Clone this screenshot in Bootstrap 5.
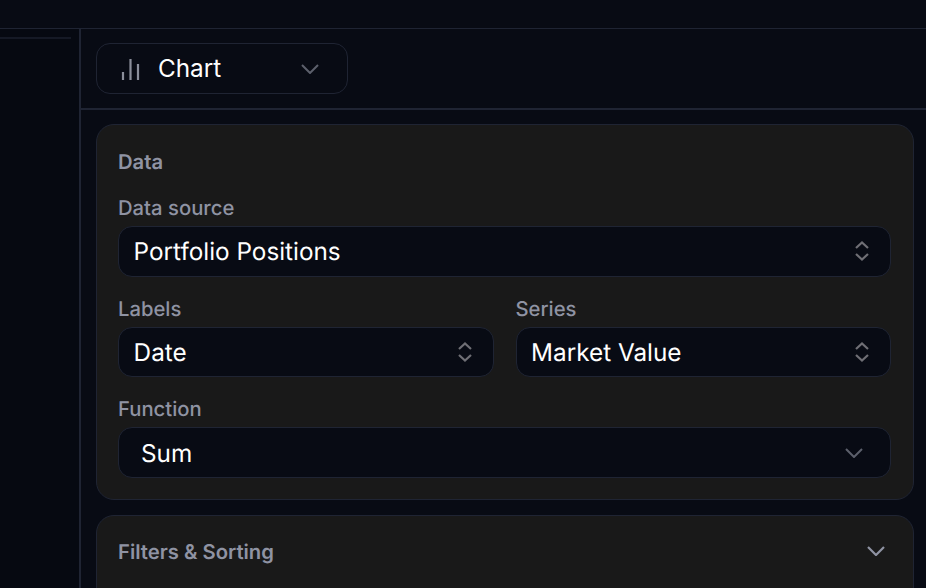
<!DOCTYPE html>
<html lang="en">
<head>
<meta charset="utf-8">
<title>Chart editor</title>
<link rel="stylesheet" href="https://cdn.jsdelivr.net/npm/bootstrap@5.3.0/dist/css/bootstrap.min.css">
<style>
html,body{height:100%;}
body{background:#080b14;font-family:Inter,"Liberation Sans",sans-serif;color:#fff;overflow:hidden;text-rendering:geometricPrecision;}
.shell{width:926px;height:588px;overflow:hidden;}
.topstrip{height:29px;border-bottom:1px solid #1f2433;flex:none;}
.sidepane{width:81px;flex:none;border-right:2px solid #1f2433;background:#060911;height:559px;padding-top:8px;}
.sideline{height:2px;width:71px;background:#151925;}
.mainpane{flex:1;min-width:0;}
.headbar{height:81px;border-bottom:2px solid #1f2433;padding:14px 0 0 15px;}
.typebtn{width:252px;height:51px;border:1px solid #1f2433;border-radius:14px;padding:0 28px 0 24px;font-size:24.3px;color:#fff;background:transparent;}
.typebtn .lbl{margin-left:17px;flex:1;text-align:left;}
.panels{padding:14px 12px 0 15px;gap:15px;}
.panelbox{width:818px;background:#191919;border:1px solid #1f2433;border-radius:18px;padding:21px 22px 21px 21px;}
.paneltitle{font-size:20.25px;font-weight:600;color:#8f93a3;line-height:32px;margin-bottom:-2px;}
.fieldname{font-size:20.25px;font-weight:500;color:#8f93a3;line-height:32px;margin:0 0 2px;display:block;}
.picker{height:50.67px;background:#080b14;border:1px solid #1f2433;border-radius:14px;font-size:24.3px;line-height:30px;color:#fff;padding:0 21px 0 14.6px;}
.picker.wide{padding:1px 27px 0 22px;}
.pickfield{margin-top:16px;}
.twocol{gap:22px;}
.twocol>div{flex:1 1 0;min-width:0;}
.panelbox.closed{height:120px;padding:20px 28px 0 21px;}
</style>
</head>
<body>
<div class="shell d-flex flex-column">
  <div class="topstrip"></div>
  <div class="d-flex flex-grow-1">
    <div class="sidepane"><div class="sideline"></div></div>
    <div class="mainpane">
      <div class="headbar">
        <button type="button" class="typebtn d-flex align-items-center">
          <svg width="20" height="22" viewBox="0 0 20 22" fill="none" stroke="#8a8e9a" stroke-width="2.200"><path d="M2 22v-8M9.500 22V1M17 22V6"/></svg>
          <span class="lbl">Chart</span>
          <svg width="18" height="10" viewBox="0 0 18 10" fill="none" stroke="#5c606c" stroke-width="2"><path d="M1 1l8 8 8-8"/></svg>
        </button>
      </div>
      <div class="panels d-flex flex-column">
        <div class="panelbox">
          <div class="paneltitle">Data</div>
          <div class="pickfield">
            <span class="fieldname">Data source</span>
            <div class="picker d-flex align-items-center justify-content-between">
              <span>Portfolio Positions</span>
              <svg width="14" height="20" viewBox="0 0 14 20" fill="none" stroke="#6f6f75" stroke-width="2.200"><path d="M1 7l6-5.500 6 5.500M1 13l6 5.500 6-5.500"/></svg>
            </div>
          </div>
          <div class="d-flex twocol pickfield">
            <div>
              <span class="fieldname">Labels</span>
              <div class="picker d-flex align-items-center justify-content-between">
                <span>Date</span>
                <svg width="14" height="20" viewBox="0 0 14 20" fill="none" stroke="#6f6f75" stroke-width="2.200"><path d="M1 7l6-5.500 6 5.500M1 13l6 5.500 6-5.500"/></svg>
              </div>
            </div>
            <div>
              <span class="fieldname">Series</span>
              <div class="picker d-flex align-items-center justify-content-between">
                <span>Market Value</span>
                <svg width="14" height="20" viewBox="0 0 14 20" fill="none" stroke="#6f6f75" stroke-width="2.200"><path d="M1 7l6-5.500 6 5.500M1 13l6 5.500 6-5.500"/></svg>
              </div>
            </div>
          </div>
          <div class="pickfield">
            <span class="fieldname">Function</span>
            <div class="picker wide d-flex align-items-center justify-content-between">
              <span>Sum</span>
              <svg width="18" height="10" viewBox="0 0 18 10" fill="none" stroke="#5c606c" stroke-width="2"><path d="M1 1l8 8 8-8"/></svg>
            </div>
          </div>
        </div>
        <div class="panelbox closed">
          <div class="d-flex justify-content-between align-items-center">
            <div class="paneltitle">Filters &amp; Sorting</div>
            <svg width="18" height="10" viewBox="0 0 18 10" fill="none" stroke="#8f93a3" stroke-width="2.200"><path d="M1 1l8 8 8-8"/></svg>
          </div>
        </div>
      </div>
    </div>
  </div>
</div>
<script src="https://cdn.jsdelivr.net/npm/bootstrap@5.3.0/dist/js/bootstrap.bundle.min.js"></script>
</body>
</html>
